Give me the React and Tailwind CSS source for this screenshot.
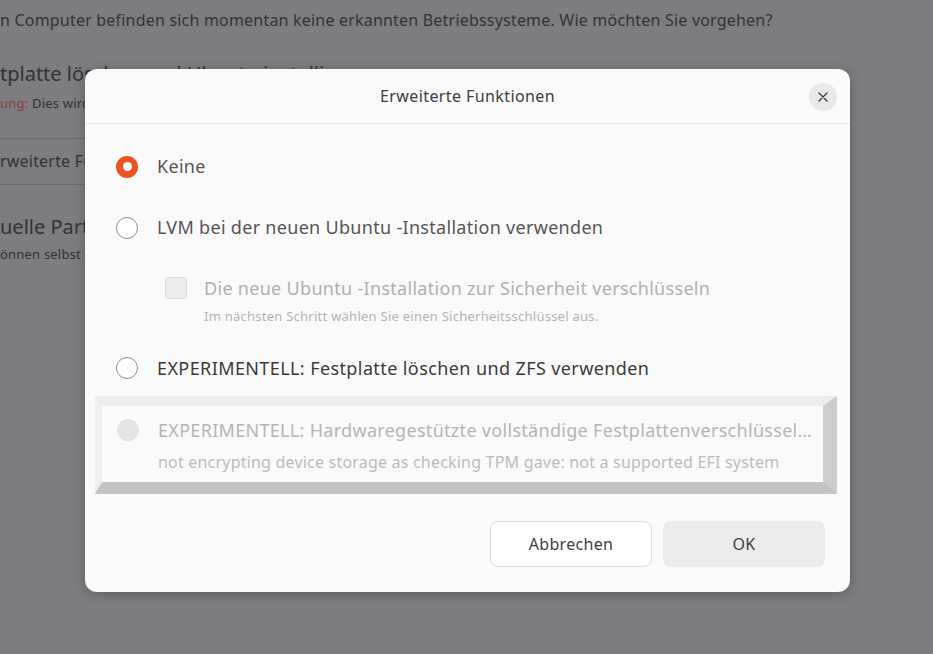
import React from 'react';

const font = { fontFamily: '"Noto Sans", "Open Sans", sans-serif' };

function Radio({ checked, disabled }) {
  if (checked) {
    return (
      <span className="flex h-[22px] w-[22px] shrink-0 items-center justify-center rounded-full bg-[#e95420]">
        <span className="h-[9px] w-[9px] rounded-full bg-white" />
      </span>
    );
  }
  if (disabled) {
    return <span className="h-[22px] w-[22px] shrink-0 rounded-full border border-[#e0e0e0] bg-[#e6e6e6]" />;
  }
  return <span className="h-[22px] w-[22px] shrink-0 rounded-full border border-[#8e8e8e] bg-white" />;
}

function Option({ checked, children, className = 'text-[#555555]' }) {
  return (
    <div className="flex h-[61px] items-center gap-[19px] pl-[31px]">
      <Radio checked={checked} />
      <span className={`text-[18px] tracking-[0.3px] ${className}`}>{children}</span>
    </div>
  );
}

// the page behind the dialog; lines that sit behind it are clipped at its left edge
function Backdrop() {
  return (
    <div className="flex flex-col text-[#333236]">
      <div className="mt-[9px] whitespace-nowrap text-[16px] leading-[22px] tracking-[0.2px]">
        n Computer befinden sich momentan keine erkannten Betriebssysteme. Wie möchten Sie vorgehen?
      </div>
      <div className="mt-[30px] whitespace-nowrap text-[20px] leading-[26px]">tplatte löschen und Ubuntu installieren</div>
      <div className="mt-[7px] w-[85px] overflow-hidden whitespace-nowrap text-[13px] leading-[18px] tracking-[0.2px]">
        <span className="text-[#8e3b41]">ung:</span> Dies wird alle Daten löschen
      </div>
      <div className="mt-[26px] h-px w-[240px] bg-[#6c6b70]" />
      <div className="mt-[11px] w-[85px] overflow-hidden whitespace-nowrap text-[16px] leading-[22px] tracking-[0.2px]">
        rweiterte Funktionen
      </div>
      <div className="mt-[12px] h-px w-[240px] bg-[#6c6b70]" />
      <div className="mt-[29px] w-[85px] overflow-hidden whitespace-nowrap text-[20px] leading-[26px]">
        uelle Partitionierung
      </div>
      <div className="mt-[5px] w-[85px] overflow-hidden whitespace-nowrap text-[13px] leading-[18px] tracking-[0.2px]">
        önnen selbst Partitionen erstellen
      </div>
    </div>
  );
}

export default function App() {
  return (
    <div className="relative h-[654px] w-[933px] overflow-hidden bg-[#7d7c81]" style={font}>
      <Backdrop />

      <div className="absolute left-[85px] top-[69px] flex h-[523px] w-[765px] flex-col rounded-[12px] bg-[#fafafa] shadow-[0_2px_12px_rgba(0,0,0,0.25)]">
        <div className="relative flex h-[55px] shrink-0 items-center justify-center border-b border-[#e6e6e6]">
          <span className="text-[16px] tracking-[0.4px] text-[#3d3d3d]">Erweiterte Funktionen</span>
          <button
            type="button"
            className="absolute right-[13px] top-[14px] flex h-[28px] w-[28px] items-center justify-center rounded-full bg-[#e8e8e8]"
          >
            <svg width="10" height="10" viewBox="0 0 10 10" fill="none">
              <path d="M1 1L9 9M9 1L1 9" stroke="#3a3a3a" strokeWidth="1.3" strokeLinecap="round" />
            </svg>
          </button>
        </div>

        <div className="flex flex-col pt-[12px]">
          <Option checked>Keine</Option>
          <Option>LVM bei der neuen Ubuntu -Installation verwenden</Option>

          <div className="flex flex-col pl-[80px] pt-[15px]">
            <div className="flex h-[30px] items-center gap-[17px]">
              <span className="h-[22px] w-[22px] shrink-0 rounded-[4px] border border-[#dcdcdc] bg-[#ebebeb]" />
              <span className="text-[18px] tracking-[0.3px] text-[#b0b0b0]">
                Die neue Ubuntu -Installation zur Sicherheit verschlüsseln
              </span>
            </div>
            <div className="mt-[4px] pl-[39px] text-[13px] leading-[18px] tracking-[0.25px] text-[#b3b3b3]">
              Im nächsten Schritt wählen Sie einen Sicherheitsschlüssel aus.
            </div>
          </div>

          <div className="mt-[28px] flex h-[30px] items-center gap-[19px] pl-[31px]">
            <Radio />
            <span className="text-[18px] tracking-[0.4px] text-[#3a3a3a]">
              EXPERIMENTELL: Festplatte löschen und ZFS verwenden
            </span>
          </div>

          <div className="ml-[10px] mr-[13px] mt-[13px] flex flex-col border-b-[12px] border-l-[7px] border-r-[14px] border-t-[10px] border-b-[#c3c3c3] border-l-[#efefef] border-r-[#cdcdcd] border-t-[#ececec] bg-[#fafafa] pb-[11px] pl-[15px] pr-[2px] pt-[9px]">
            <div className="flex h-[30px] min-w-0 items-center gap-[19px]">
              <Radio disabled />
              <span className="min-w-0 truncate text-[18px] tracking-[0.3px] text-[#b5b5b5]">
                EXPERIMENTELL: Hardwaregestützte vollständige Festplattenverschlüsselung
              </span>
            </div>
            <div className="mt-[8px] whitespace-nowrap pl-[41px] text-[16px] leading-[18px] tracking-[0.2px] text-[#bcbcbc]">
              not encrypting device storage as checking TPM gave: not a supported EFI system
            </div>
          </div>

          <div className="mt-[27px] flex justify-end gap-[11px] pr-[25px]">
            <button
              type="button"
              className="h-[46px] w-[162px] rounded-[8px] border border-[#dcdcdc] bg-white text-[16px] tracking-[0.3px] text-[#3d3d3d]"
            >
              Abbrechen
            </button>
            <button
              type="button"
              className="h-[46px] w-[162px] rounded-[8px] bg-[#ebebeb] text-[16px] tracking-[0.3px] text-[#3d3d3d]"
            >
              OK
            </button>
          </div>
        </div>
      </div>
    </div>
  );
}
